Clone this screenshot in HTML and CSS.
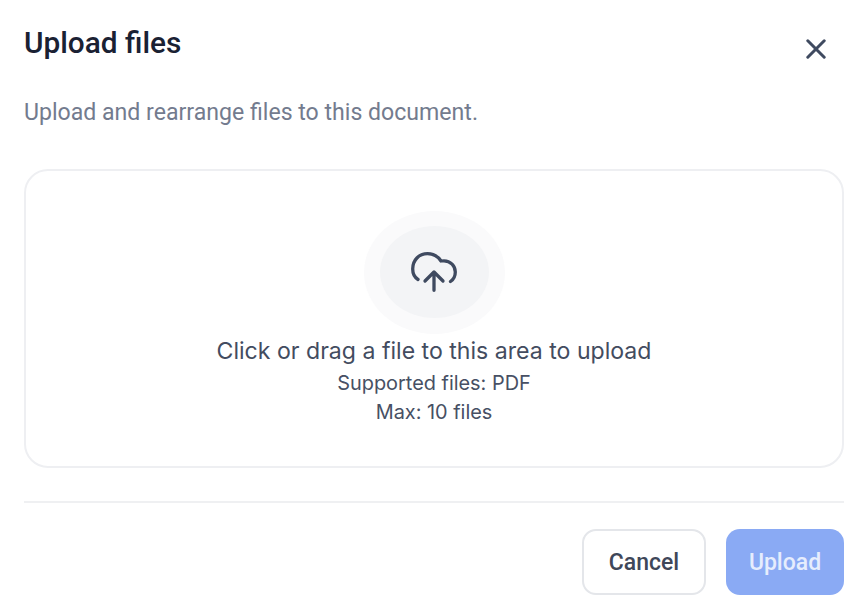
FILE: index.html
```html
<!DOCTYPE html>
<html lang="en">
<head>
<meta charset="utf-8">
<title>Upload files</title>
<link rel="stylesheet" href="styles.css">
</head>
<body>
<main class="dialog">
  <header class="head">
    <h1 class="title">Upload files</h1>
    <button class="close" aria-label="Close">
      <svg width="20" height="20" viewBox="0 0 20 20" fill="none" stroke="#3f4a60" stroke-width="3" stroke-linecap="round"><path d="M1.8 1.8 L18.2 18.2 M18.2 1.8 L1.8 18.2"/></svg>
    </button>
  </header>
  <p class="sub">Upload and rearrange files to this document.</p>
  <section class="drop">
    <div class="halo">
      <div class="inner">
        <svg width="46" height="40" viewBox="0 0 46 40" fill="none" stroke="#3f4a60" stroke-width="3.3" stroke-linecap="round" stroke-linejoin="round"><path d="M7 27.5 C3 25 1.7 21 1.7 17 C1.7 8 8 1.7 16.5 1.7 C22 1.7 27 4.5 30 9 C31 8.8 32 8.8 33 8.8 C39.5 8.8 44.3 14 44.3 20 C44.3 24.5 42.5 27.5 39.5 29.5"/><path d="M23 38.3 V20 M14 29 L23 20 L32 29"/></svg>
      </div>
    </div>
    <p class="lead">Click or drag a file to this area to upload</p>
    <p class="note">Supported files: PDF</p>
    <p class="note">Max: 10 files</p>
  </section>
  <hr class="rule">
  <footer class="actions">
    <button class="btn cancel">Cancel</button>
    <button class="btn upload">Upload</button>
  </footer>
</main>
</body>
</html>
```

FILE: styles.css
```css
* { box-sizing: border-box; }
html, body { margin: 0; height: 100%; background: #fff; }
body { font-family: Inter, "Liberation Sans", sans-serif; overflow: hidden; }
.dialog { width: 860px; height: 607px; padding: 24px 16px 12px 24px; display: flex; flex-direction: column; }
.head { display: flex; justify-content: space-between; align-items: flex-start; height: 48px; }
.title { margin: 0; font-family: Roboto, sans-serif; font-size: 29.8px; line-height: 38px; font-weight: 500; color: #1a2133; }
.close { border: 0; background: none; padding: 0; width: 20px; height: 20px; margin: 15px 18px 0 0; display: flex; }
.sub { margin: 26px 0 0; font-family: Roboto, sans-serif; font-size: 23.1px; line-height: 30px; color: #737b8e; height: 40px; }
.drop { margin-top: 31px; height: 300px; border: 2px solid #eeeff2; border-radius: 24px; display: flex; flex-direction: column; align-items: center; padding-top: 40px; }
.halo { width: 141px; height: 123px; border-radius: 50%; background: #fafafb; display: flex; align-items: center; justify-content: center; }
.inner { width: 109px; height: 92px; border-radius: 50%; background: #f3f4f6; display: flex; align-items: center; justify-content: center; }
.lead { margin: 2px 0 3px; font-size: 23.1px; line-height: 30px; color: #434c5f; }
.note { margin: 0; font-size: 19.9px; line-height: 29px; color: #475064; }
.rule { margin: 33px 0 0; border: 0; border-top: 2px solid #eff0f2; width: 100%; }
.actions { margin-top: 26px; display: flex; justify-content: flex-end; gap: 20px; }
.btn { height: 66px; border-radius: 14px; font-family: Roboto, sans-serif; font-size: 23px; font-weight: 500; }
.cancel { width: 124px; background: #fff; border: 2px solid #e4e6ea; color: #3f4759; }
.upload { width: 118px; background: #8aaaf4; border: 0; color: #e6edfd; }
```
